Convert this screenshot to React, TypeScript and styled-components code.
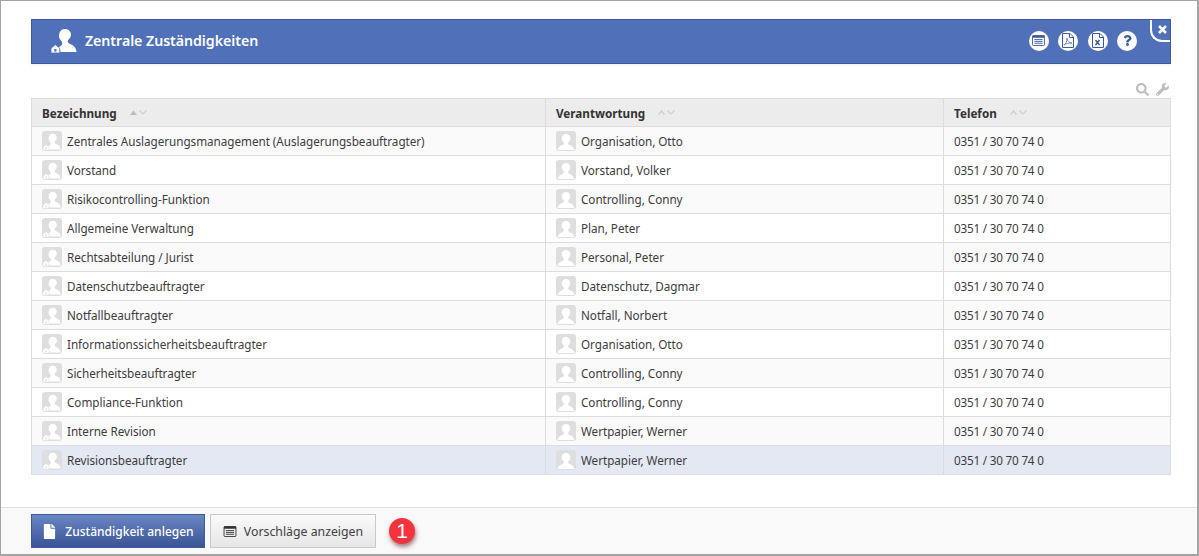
import React from 'react';
import styled, { createGlobalStyle } from 'styled-components';
import { FaFile, FaQuestion, FaSearch, FaWrench } from 'react-icons/fa';

const GlobalStyle = createGlobalStyle`
  html, body { margin: 0; padding: 0; background: #fff; }
  body { font-family: "Noto Sans", "Open Sans", sans-serif; color: #333; }
`;

const Frame = styled.div`
  width: 1199px;
  height: 556px;
  box-sizing: border-box;
  border: 1px solid #a4a4a4;
  border-right-width: 2px;
  border-bottom-width: 2px;
  display: flex;
  flex-direction: column;
  overflow: hidden;
`;

const Content = styled.main`
  flex: 1;
  padding: 18px 26px 0 30px;
`;

const Banner = styled.header`
  position: relative;
  height: 45px;
  box-sizing: border-box;
  background: #5070ba;
  border: 1px solid #3c5a9e;
  display: flex;
  align-items: center;
  padding: 0 0 2px 19px;
  box-shadow: 0 2px 0 #f6f6f6;
  overflow: hidden;
`;

const Title = styled.h1`
  margin: 0 0 0 8px;
  font-size: 14.2px;
  font-weight: 600;
  color: #fff;
  letter-spacing: -0.05px;
`;

const BannerActions = styled.div`
  margin-left: auto;
  margin-right: 33px;
  display: flex;
  gap: 9.5px;
`;

const RoundAction = styled.span`
  width: 20px;
  height: 20px;
  border-radius: 50%;
  background: #fff;
  display: flex;
  align-items: center;
  justify-content: center;
  color: #3c5a9e;
`;

const CloseCorner = styled.span`
  position: absolute;
  top: -2px;
  right: -2px;
  width: 20px;
  height: 22px;
  border-left: 2px solid #fff;
  border-bottom: 2px solid #fff;
  border-bottom-left-radius: 12px;
  display: flex;
  align-items: center;
  justify-content: center;
`;

const Tools = styled.div`
  height: 34px;
  display: flex;
  justify-content: flex-end;
  align-items: flex-end;
  gap: 7px;
  padding: 0 2px 2px 0;
  color: #bdbdbd;
  box-sizing: border-box;
`;

const Table = styled.table`
  width: 1139px;
  table-layout: fixed;
  border-collapse: collapse;
  font-size: 11.7px;
`;

const HeadCell = styled.th`
  height: 27px;
  padding: 0 0 0 10px;
  background: #ececec;
  border: 1px solid #dcdcdc;
  text-align: left;
  font-size: 11.7px;
  font-weight: 700;
  color: #333;
`;

const HeadInner = styled.span`
  display: flex;
  align-items: center;
`;

const Row = styled.tr<{ $tone: 'odd' | 'even' | 'selected' }>`
  background: ${p => (p.$tone === 'selected' ? '#e4e8f3' : p.$tone === 'odd' ? '#fafafa' : '#fff')};
`;

const Cell = styled.td`
  height: 28px;
  padding: 0 0 0 10px;
  border: 1px solid #dcdcdc;
  color: #3c3c3c;
  white-space: nowrap;
`;

const CellInner = styled.span`
  display: flex;
  align-items: center;
  gap: 5px;
  letter-spacing: -0.03px;
`;

const Phone = styled.span`
  letter-spacing: -0.2px;
`;

const Avatar = styled.span`
  width: 20px;
  height: 20px;
  flex: none;
  border-radius: 3px;
  background: #dedede;
  display: flex;
  align-items: flex-end;
  justify-content: center;
`;

const Footer = styled.footer`
  height: 47px;
  box-sizing: border-box;
  border-top: 1px solid #dfdfdf;
  background: #f9f9f9;
  padding: 6px 0 0 30px;
  display: flex;
  align-items: flex-start;
  gap: 5px;
`;

const PrimaryButton = styled.button`
  height: 34px;
  width: 174px;
  box-sizing: border-box;
  border: 1px solid #3c5a9e;
  background: linear-gradient(#6a86c4, #3a5496);
  color: #fff;
  font: 500 12px "Noto Sans", sans-serif;
  display: flex;
  align-items: center;
  justify-content: center;
  gap: 8px;
  padding: 0;
`;

const SecondaryButton = styled.button`
  height: 34px;
  width: 166px;
  box-sizing: border-box;
  border: 1px solid #c8c8c8;
  background: linear-gradient(#fafafa, #e6e6e6);
  color: #404040;
  font: 400 12.3px "Noto Sans", sans-serif;
  display: flex;
  align-items: center;
  justify-content: center;
  gap: 7px;
  padding: 0;
`;

const Callout = styled.span`
  width: 26px;
  height: 26px;
  margin: 4px 0 0 8px;
  border-radius: 50%;
  background: #f3343f;
  color: #fff;
  font: 400 21px "Liberation Sans", sans-serif;
  display: flex;
  align-items: center;
  justify-content: center;
  box-shadow: 1px 3px 4px rgba(90, 30, 30, 0.55);
`;

const PersonHouse = ({ size, color, bg }: { size: number; color: string; bg: string }) => (
  <svg width={size} height={size} viewBox="0 0 26 24">
    <path
      fill={color}
      d="M14 0c3.800 0 6 2.600 6 5.600 0 2.800-1.800 4.600-3.200 6-.4 1.600.4 2.600 1.800 3.200 2.600 1.200 6.400 2.400 7 8.200H9.600c-.4-2-2-3.600-3-4.400 2-.8 4-2 4.600-3.400.3-1.200 0-2-.7-3-1.200-1.400-2.500-2.800-2.500-4.600C8 2.600 10.200 0 14 0z"
    />
    <path fill={color} stroke={bg} strokeWidth="0.8" d="M0 19.4 4.4 15.6 8.8 19.4V24H0z" />
    <rect x="3.3" y="20" width="2.2" height="2.6" fill={bg} />
  </svg>
);

const Person = () => (
  <svg width="18" height="18" viewBox="0 0 20 20">
    <path
      fill="#fff"
      d="M10 1c3 0 4.800 2.200 4.800 4.800 0 2.200-1.200 3.600-2.400 4.800-.3 1.400.3 2.200 1.500 2.800 2 1 4.600 1.600 5.300 5.600H.8c.7-4 3.300-4.600 5.300-5.600 1.200-.6 1.800-1.400 1.500-2.800-1.200-1.200-2.400-2.600-2.400-4.800C5.200 3.200 7 1 10 1z"
    />
  </svg>
);

const CloseMark = () => (
  <svg width="9" height="9" viewBox="0 0 9 9">
    <path stroke="#fff" strokeWidth="2.6" d="M1 1l7 7M8 1l-7 7" />
  </svg>
);

const ListIcon = ({ color = '#3c5a9e', w = 15, h = 11 }: { color?: string; w?: number; h?: number }) => (
  <svg width={w} height={h} viewBox="0 0 14 12">
    <rect x="0.5" y="0.5" width="13" height="11" rx="1" fill="none" stroke={color} />
    <rect x="0.5" y="0.5" width="13" height="2.500" fill={color} />
    <path stroke={color} d="M2.500 5h9M2.500 7h9M2.500 9h9" />
  </svg>
);

const DocIcon = ({ label }: { label: 'pdf' | 'x' }) => (
  <svg width="12" height="15" viewBox="0 0 12 15">
    <path fill="none" stroke="#3c5a9e" d="M.5.500h7.500l3.500 3.500v10.500H.5z" />
    <path fill="none" stroke="#3c5a9e" d="M7.500.5v4h4" />
    {label === 'pdf' ? (
      <path fill="none" stroke="#6f7fb8" strokeWidth="0.9" d="M2 12c2-1 3-4 3-7 0 3 2 5 5 5-3 0-6 .500-8 2z" />
    ) : (
      <path fill="none" stroke="#3c5a9e" strokeWidth="1.5" d="M3.500 7l4 5M7.500 7l-4 5" />
    )}
  </svg>
);

const SortIcon = ({ active }: { active?: boolean }) => (
  <svg width="17" height="7" viewBox="0 0 17 7" style={{ marginLeft: 13 }}>
    {active ? (
      <path fill="#bdbdbd" d="M0 6 3.500 1.500 7 6z" />
    ) : (
      <path fill="none" stroke="#cfcfcf" strokeWidth="1.2" d="M.5 5.500 3.500 2 6.500 5.500" />
    )}
    <path fill="none" stroke="#cfcfcf" strokeWidth="1.2" d="M9.500 1.500 13 5l3.500-3.500" />
  </svg>
);

const rows: [string, string][] = [
  ['Zentrales Auslagerungsmanagement (Auslagerungsbeauftragter)', 'Organisation, Otto'],
  ['Vorstand', 'Vorstand, Volker'],
  ['Risikocontrolling-Funktion', 'Controlling, Conny'],
  ['Allgemeine Verwaltung', 'Plan, Peter'],
  ['Rechtsabteilung / Jurist', 'Personal, Peter'],
  ['Datenschutzbeauftragter', 'Datenschutz, Dagmar'],
  ['Notfallbeauftragter', 'Notfall, Norbert'],
  ['Informationssicherheitsbeauftragter', 'Organisation, Otto'],
  ['Sicherheitsbeauftragter', 'Controlling, Conny'],
  ['Compliance-Funktion', 'Controlling, Conny'],
  ['Interne Revision', 'Wertpapier, Werner'],
  ['Revisionsbeauftragter', 'Wertpapier, Werner'],
];

const App: React.FC = () => {
  return (
    <Frame>
      <GlobalStyle />
      <Content>
        <Banner>
          <PersonHouse size={26} color="#fff" bg="#5070ba" />
          <Title>Zentrale Zuständigkeiten</Title>
          <BannerActions>
            <RoundAction><ListIcon /></RoundAction>
            <RoundAction><DocIcon label="pdf" /></RoundAction>
            <RoundAction><DocIcon label="x" /></RoundAction>
            <RoundAction><FaQuestion size={11} /></RoundAction>
          </BannerActions>
          <CloseCorner><CloseMark /></CloseCorner>
        </Banner>
        <Tools>
          <FaSearch size={13} />
          <FaWrench size={13} />
        </Tools>
        <Table>
          <colgroup>
            <col style={{ width: 514 }} />
            <col style={{ width: 398 }} />
            <col style={{ width: 227 }} />
          </colgroup>
          <thead>
            <tr>
              <HeadCell><HeadInner>Bezeichnung<SortIcon active /></HeadInner></HeadCell>
              <HeadCell><HeadInner>Verantwortung<SortIcon /></HeadInner></HeadCell>
              <HeadCell><HeadInner>Telefon<SortIcon /></HeadInner></HeadCell>
            </tr>
          </thead>
          <tbody>
            {rows.map(([name, owner], i) => (
              <Row key={name} $tone={i === rows.length - 1 ? 'selected' : i % 2 === 0 ? 'odd' : 'even'}>
                <Cell>
                  <CellInner>
                    <Avatar><PersonHouse size={18} color="#fff" bg="#dedede" /></Avatar>
                    {name}
                  </CellInner>
                </Cell>
                <Cell>
                  <CellInner>
                    <Avatar><Person /></Avatar>
                    {owner}
                  </CellInner>
                </Cell>
                <Cell><Phone>0351 / 30 70 74 0</Phone></Cell>
              </Row>
            ))}
          </tbody>
        </Table>
      </Content>
      <Footer>
        <PrimaryButton><FaFile size={15} />Zuständigkeit anlegen</PrimaryButton>
        <SecondaryButton><ListIcon color="#333" w={14} h={11} />Vorschläge anzeigen</SecondaryButton>
        <Callout>1</Callout>
      </Footer>
    </Frame>
  );
};

export default App;
